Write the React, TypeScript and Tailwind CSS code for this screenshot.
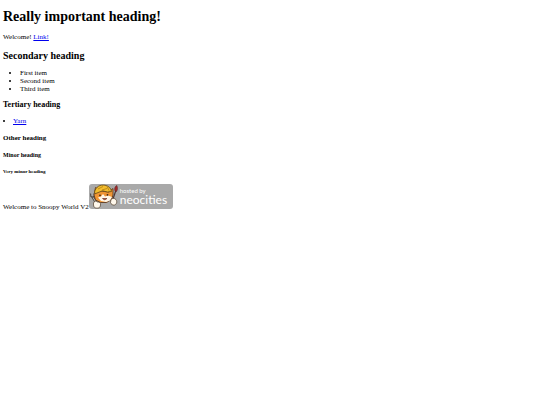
function BadgeCat() {
  return (
    <svg viewBox="0 0 31 25" className="block h-[25px] w-[31px] shrink-0" aria-hidden="true">
      <path d="M3.500 12.500L8 20" stroke="#4d4c48" strokeWidth="2.600" />
      <path d="M3.500 12.500L8 20" stroke="#c9c7c2" strokeWidth="1" />
      <path d="M1.500 9.500l.3 2.800 2 1 1.700-1.200-.5-2.600" stroke="#55534f" strokeWidth="1.200" fill="none" />
      <path d="M6.500 3.500L5 11l1.500 5 5 2.500h6l5-3 1.500-4.500V4.500l-4.500 3.500-7-1z" fill="#ef9433" stroke="#503019" strokeWidth="0.800" />
      <path d="M9 13.500l3-1 2-2.500 2 2.500 3-1 4 1.500-2 3.500-4 1.500-5-1z" fill="#fff6e8" />
      <path d="M5.500 8C7 2.500 11 .5 16 1.200c4 .8 6 3.300 6.500 6.300l-4 .5-5-1.200-7.500 3z" fill="#f3bd2d" stroke="#70521b" strokeWidth="0.900" />
      <path d="M9 5l5-2.500M13 6l5-1.500M18 2.500l2 4" stroke="#b98617" strokeWidth="0.900" fill="none" />
      <circle cx="11" cy="11.300" r="0.900" fill="#38251a" />
      <circle cx="18.500" cy="10.800" r="0.900" fill="#38251a" />
      <path d="M13.500 14.500q2 2.500 4.500 0z" fill="#a5442d" stroke="#6b3021" strokeWidth="0.600" />
      <path d="M27 6l-4 12" stroke="#4b3531" strokeWidth="1.200" />
      <path d="M26 7c-1-3 .5-5 1.800-5.500.8 2 1 4-.3 6z" fill="#a82a2a" stroke="#5f2424" strokeWidth="0.600" />
      <path d="M4.500 19c.5-2 3-2.500 4-1 2-.2 3.500 1 3 3 0 2-1.500 3.200-3.500 3.200s-3.500-1.200-3.500-3.200z" fill="#fff8ec" stroke="#54402c" strokeWidth="0.700" />
      <path d="M22 15.500c1.500-1.500 4-1.500 5 .2 1.500 2 .5 4.800-1.500 5.300-2 .4-3.500-.8-4-2.500z" fill="#fff8ec" stroke="#54402c" strokeWidth="0.700" />
    </svg>
  );
}

function NeocitiesBadge() {
  return (
    <span className="inline-block h-[25px] w-[84px] overflow-hidden rounded-[3px] bg-[#a9a9a9] align-baseline text-white">
      <span className="flex">
        <BadgeCat />
        <span className="flex flex-col pt-1 font-[Lato,sans-serif] whitespace-nowrap">
          <span className="text-[6px] leading-[6px]">hosted by</span>
          <span className="text-[12px] leading-3">neocities</span>
        </span>
      </span>
    </span>
  );
}

export default function App() {
  return (
    <main className="px-[3px] pt-[9px] font-['Liberation_Serif',serif] text-[7px] leading-[8px] text-black">
      <h1 className="text-[14px] leading-4 font-bold">Really important heading!</h1>
      <p className="mt-2">
        Welcome! <a href="#link" className="text-[#0000ee] underline">Link!</a>
      </p>
      <h2 className="mt-[9px] text-[10px] leading-3 font-bold">Secondary heading</h2>
      <ul className="mt-[7px] list-disc pl-[17px]">
        <li>First item</li>
        <li>Second item</li>
        <li>Third item</li>
      </ul>
      <h3 className="mt-[7px] text-[8px] leading-[10px] font-bold">Tertiary heading</h3>
      <ul className="mt-[7px] list-inside list-disc">
        <li><a href="#yarn" className="text-[#0000ee] underline">Yarn</a></li>
      </ul>
      <h4 className="mt-[9px] font-bold">Other heading</h4>
      <h5 className="mt-[9px] text-[6px] font-bold">Minor heading</h5>
      <h6 className="mt-[9px] text-[5px] font-bold">Very minor heading</h6>
      <p className="mt-2">
        Welcome to Snoopy World V2<NeocitiesBadge />
      </p>
    </main>
  );
}
